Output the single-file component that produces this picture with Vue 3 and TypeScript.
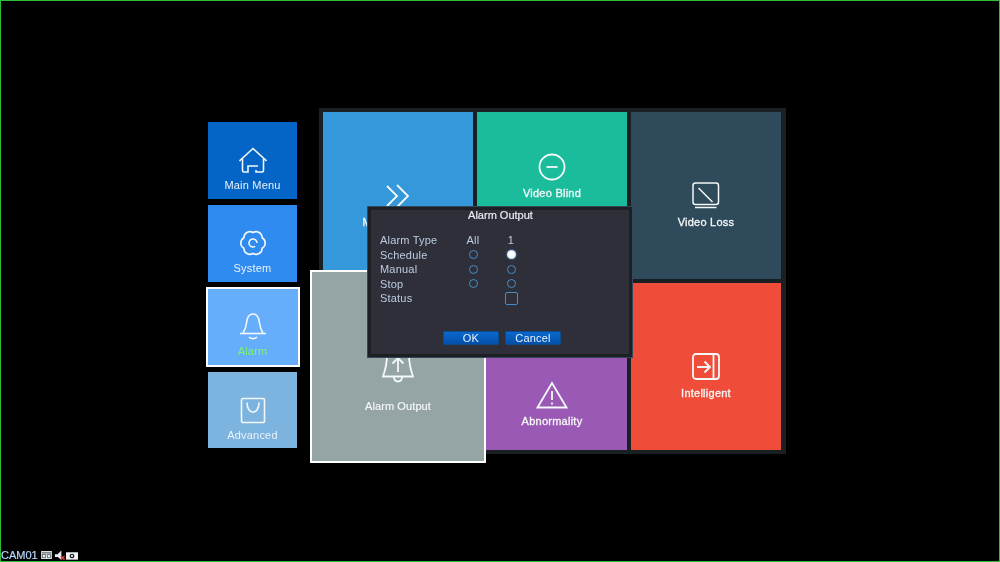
<template>
  <div class="screen">
    <div class="stage">
      <nav class="menu">
        <div
          v-for="item in menuItems"
          :key="item.label"
          class="menu-tile"
          :class="{ active: item.active }"
          :style="{ background: item.color }"
        >
          <svg class="menu-icon" viewBox="0 0 28 28">
            <path v-for="d in item.paths" :key="d" :d="d" />
          </svg>
          <span>{{ item.label }}</span>
        </div>
      </nav>

      <section class="panel">
        <div class="col">
          <div class="tile motion">
            <svg class="tile-icon" viewBox="0 0 28 28"><path d="M3 4l10 10L3 24M13 3l11 11-11 11" /></svg>
            <span>Motion Detect</span>
          </div>
          <div class="tile plain"></div>
        </div>
        <div class="col">
          <div class="tile blind">
            <svg class="tile-icon" viewBox="0 0 28 28">
              <circle cx="14" cy="14" r="12.5" />
              <path d="M8.5 14h11" />
            </svg>
            <span>Video Blind</span>
          </div>
          <div class="tile abnormal">
            <svg class="tile-icon" viewBox="0 0 32 28">
              <path d="M16 2L1.5 26.5h29zM16 10v9M16 21.5v2" />
            </svg>
            <span>Abnormality</span>
          </div>
        </div>
        <div class="col">
          <div class="tile loss">
            <svg class="tile-icon thin" viewBox="0 0 28 28">
              <rect x="1" y="1" width="25.5" height="21.5" rx="2.5" />
              <path d="M6.5 6l14 14M3 25.5h21.5" />
            </svg>
            <span>Video Loss</span>
          </div>
          <div class="tile intelligent">
            <svg class="tile-icon" viewBox="0 0 28 28">
              <rect x="1" y="1" width="26" height="25" rx="3" />
              <path d="M21.5 1v25M5 14h13M12.5 8.5L18 14l-5.500 5.500" />
            </svg>
            <span>Intelligent</span>
          </div>
        </div>

        <div class="tile selected">
          <svg class="selected-icon" viewBox="0 0 32 36">
            <path d="M5 5C5 3 7 1 9 1h14c2 0 4 2 4 4 0 8 1 13 4 21.500H1C4 18 5 13 5 5z" />
            <path d="M12 27c0 6 8 6 8 0M16 22V8M10.500 13.500L16 8l5.500 5.500" />
          </svg>
          <span>Alarm Output</span>
        </div>
      </section>
    </div>

    <div class="dialog">
      <h1 class="dialog-title">Alarm Output</h1>
      <div class="table">
        <span>Alarm Type</span>
        <span class="cell">All</span>
        <span class="cell">1</span>
        <template v-for="row in radioRows" :key="row.label">
          <span>{{ row.label }}</span>
          <span class="cell"><i class="radio" /></span>
          <span class="cell"><i class="radio" :class="{ checked: row.checked }" /></span>
        </template>
        <span>Status</span>
        <span class="cell"></span>
        <span class="cell"><i class="check" /></span>
      </div>
      <div class="actions">
        <button class="btn">OK</button>
        <button class="btn">Cancel</button>
      </div>
    </div>

    <div class="status">
      <span class="cam">CAM01</span>
      <svg width="11" height="8" viewBox="0 0 12 9">
        <rect width="12" height="9" fill="#e8eef0" />
        <rect x="1" y="1" width="10" height="2" fill="#7f8a90" />
        <rect x="1.500" y="4" width="3.500" height="3.500" fill="none" stroke="#6a747a" />
        <rect x="7" y="4" width="3.500" height="3.500" fill="none" stroke="#6a747a" />
      </svg>
      <svg class="speaker" width="11" height="11" viewBox="0 0 12 11">
        <path d="M1 4h3l4-4v10L4 7H1z" fill="#e8eef0" />
        <path d="M7.500 6l4 4M11.500 6l-4 4" stroke="#e0403a" stroke-width="1.600" />
      </svg>
      <svg width="12" height="9" viewBox="0 0 13 9">
        <rect y="1" width="13" height="8" fill="#eef2f2" />
        <circle cx="6.500" cy="5" r="2.500" fill="#111" />
        <circle cx="6.500" cy="5" r="1.200" fill="#eef2f2" />
      </svg>
    </div>
  </div>
</template>

<script setup lang="ts">
interface MenuItem {
  label: string
  color: string
  paths: string[]
  active?: boolean
}

const menuItems: MenuItem[] = [
  {
    label: 'Main Menu',
    color: '#0565c6',
    paths: [
      'M.5 15L14 2.500 27.500 15',
      'M3.500 13v11.500c0 1 .5 1.500 1.500 1.500h4v-6h10',
      'M24.500 13v11.500c0 1-.5 1.500-1.500 1.500h-6v-2',
    ],
  },
  {
    label: 'System',
    color: '#2f8bef',
    paths: [
      'M14 3.500A6 6 0 0 1 23.100 8.750A6 6 0 0 1 23.100 19.250A6 6 0 0 1 14 24.500A6 6 0 0 1 4.900 19.250A6 6 0 0 1 4.900 8.750A6 6 0 0 1 14 3.500z',
      'M18 14a4 4 0 1 0-1.800 3.300',
    ],
  },
  {
    label: 'Alarm',
    color: '#66adfb',
    active: true,
    paths: [
      'M4 21C6 18 7 15 7.500 11 8 6 10 2 14 2s6 4 6.500 9c.5 4 1.500 7 3.500 10',
      'M1 21.500h26',
      'M10 25c2 2.200 6 2.200 8 0',
    ],
  },
  {
    label: 'Advanced',
    color: '#7cb4df',
    paths: [
      'M4 2.500h20a1.500 1.500 0 0 1 1.500 1.500v21a1.500 1.500 0 0 1-1.500 1.500H4a1.500 1.500 0 0 1-1.500-1.500V4A1.500 1.500 0 0 1 4 2.500z',
      'M8 6.500c0 13 12 13 12 0',
    ],
  },
]

const radioRows = [
  { label: 'Schedule', checked: true },
  { label: 'Manual', checked: false },
  { label: 'Stop', checked: false },
]
</script>

<style>
html,
body {
  background: #000;
}
</style>

<style scoped>
.screen {
  position: relative;
  box-sizing: border-box;
  width: 1000px;
  height: 562px;
  overflow: hidden;
  border: 1px solid #2bbd35;
  background: #000;
  color: #fff;
  font-family: "Liberation Sans", Arial, sans-serif;
  filter: blur(0.3px);
}

.stage {
  display: flex;
  align-items: flex-start;
  gap: 22px;
  padding: 107px 0 0 207px;
}

.menu {
  display: flex;
  flex-direction: column;
  gap: 6.670px;
  width: 89px;
  margin-top: 14px;
}

.menu-tile {
  box-sizing: border-box;
  display: flex;
  flex-direction: column;
  align-items: center;
  height: 76.500px;
  padding-top: 24px;
  font-size: 11px;
  letter-spacing: 0.2px;
  color: #e8f2fb;
}

.menu-tile.active {
  height: 80px;
  margin: -1.500px -2.500px -1.500px;
  padding-top: 23.500px;
  border: 2px solid #fff;
  color: #7cf07c;
}

.menu-icon {
  width: 28px;
  height: 28px;
  margin-bottom: 5px;
  fill: none;
  stroke: #f2f7fc;
  stroke-width: 1.600;
}

.panel {
  position: relative;
  display: flex;
  gap: 4px;
  width: 467px;
  height: 346px;
  box-sizing: border-box;
  padding: 4px;
  background: #1a1f24;
}

.col {
  display: flex;
  flex-direction: column;
  gap: 4px;
  flex: 0 0 150px;
}

.tile {
  display: flex;
  flex-direction: column;
  align-items: center;
  box-sizing: border-box;
  font-size: 11px;
  letter-spacing: 0.25px;
  -webkit-text-stroke: 0.3px #f6f8f8;
  color: #f6f8f8;
}

.tile span {
  margin-top: 6px;
}

.tile-icon {
  width: 28px;
  height: 28px;
  fill: none;
  stroke: #f4f8f8;
  stroke-width: 1.800;
}

.tile-icon.thin {
  stroke-width: 1.500;
}

.motion {
  height: 167px;
  padding-top: 70px;
  background: #3498db;
}

.plain {
  flex: 1;
  background: #95a5a6;
}

.blind {
  height: 138px;
  padding-top: 41px;
  background: #1abc9c;
}

.abnormal {
  flex: 1;
  justify-content: flex-end;
  padding-bottom: 23px;
  background: #9b59b6;
}

.abnormal .tile-icon {
  width: 32px;
}

.loss {
  height: 167px;
  padding-top: 70px;
  background: #2f4a5b;
}

.intelligent {
  flex: 1;
  padding-top: 70px;
  background: #f04c3a;
}

/* zoomed tile for the focused entry, hangs over the neighbours */
.selected {
  position: absolute;
  left: -9px;
  top: 162px;
  width: 176px;
  height: 193px;
  padding-top: 78px;
  border: 2px solid #fff;
  background: #95a5a6;
  letter-spacing: 0.1px;
  -webkit-text-stroke: 0.15px #f6f8f8;
}

.selected span {
  margin-top: 14px;
}

.selected-icon {
  width: 32px;
  height: 36px;
  fill: none;
  stroke: #f4f8f8;
  stroke-width: 1.800;
}

.dialog {
  position: absolute;
  left: 366px;
  top: 205px;
  box-sizing: border-box;
  width: 266px;
  height: 152px;
  padding: 0 8px 0 9px;
  border: 4px solid #1c2025;
  outline: 1px solid #35475a;
  outline-offset: -1px;
  background: #2e2f38;
  color: #bccde2;
  font-size: 11px;
  letter-spacing: 0.2px;
}

.dialog-title {
  margin: 0;
  font-size: 11px;
  font-weight: normal;
  line-height: 11px;
  text-align: center;
  letter-spacing: 0;
  -webkit-text-stroke: 0.2px #e6ebf2;
  color: #e6ebf2;
}

.table {
  display: grid;
  grid-template-columns: 74px 38px 38px;
  grid-auto-rows: 14.500px;
  align-items: center;
  margin-top: 12px;
}

.cell {
  display: flex;
  justify-content: center;
  align-items: center;
  height: 14.500px;
}

.radio {
  box-sizing: border-box;
  width: 9px;
  height: 9px;
  border: 1.200px solid #4a8cc4;
  border-radius: 50%;
}

.radio.checked {
  border-color: #cfe6fb;
  background: #fff;
  box-shadow: 0 0 2px #6fb2ee;
}

.check {
  box-sizing: border-box;
  width: 13px;
  height: 13px;
  border: 1.500px solid #3f8ec9;
  border-radius: 2px;
}

.actions {
  display: flex;
  justify-content: center;
  gap: 6px;
  margin-top: 25px;
  padding-left: 3px;
}

.btn {
  width: 56px;
  height: 14px;
  padding: 0;
  border: 1px solid #0f4a8c;
  border-radius: 1px;
  background: linear-gradient(#0a68cc, #0450aa);
  color: #e8f0fa;
  font: 11px "Liberation Sans", Arial, sans-serif;
  letter-spacing: 0.2px;
  line-height: 12px;
}

.status {
  position: absolute;
  left: 0;
  bottom: 0;
  display: flex;
  align-items: center;
  gap: 1px;
  height: 12px;
  color: #b4d8ff;
  font-size: 11px;
  -webkit-text-stroke: 0.2px #b4d8ff;
}

.cam {
  margin-right: 2px;
}

.speaker {
  margin-left: 1px;
}
</style>
